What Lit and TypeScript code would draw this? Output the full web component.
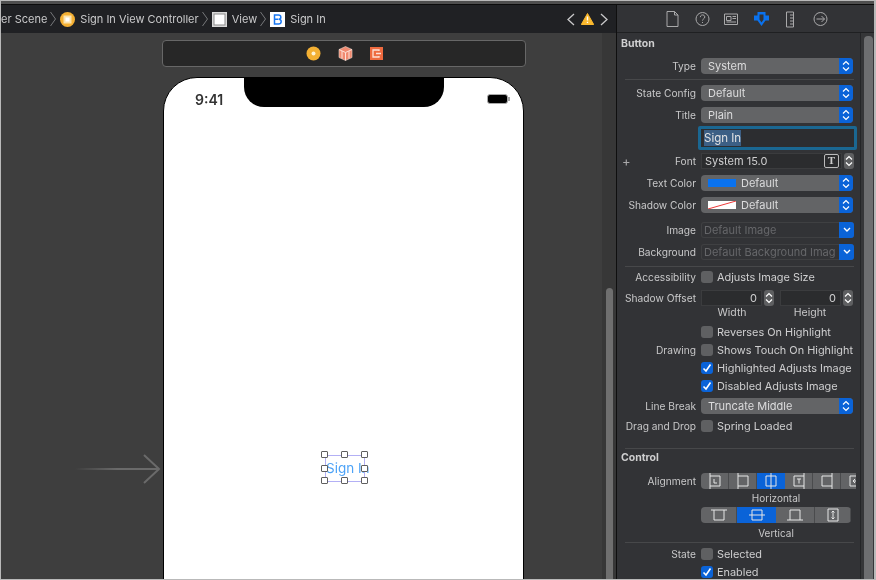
import {LitElement, html, css, svg} from 'lit';
import {customElement} from 'lit/decorators.js';

const updown = html`<svg width="8" height="12" viewBox="0 0 8 12" fill="none" stroke="#fff" stroke-width="1.2">
  <path d="M1 4.5 4 1.5 7 4.5M1 7.5 4 10.5 7 7.5" />
</svg>`;

const check = html`<svg width="10" height="10" viewBox="0 0 10 10" fill="none" stroke="#fff" stroke-width="1.6">
  <path d="M1.5 5.5 4 8 8.5 1.5" />
</svg>`;

const crumbSep = html`<svg class="sep" width="6" height="16" viewBox="0 0 6 16" fill="none" stroke="#77787a">
  <path d="M.5 1 5.500 8 .5 15" />
</svg>`;

const tabIcons = [
  svg`<path d="M3 2.5h7.5l3.5 3.5v11.5h-11zM10.5 2.5v3.5h3.5" />`,
  svg`<circle cx="8.5" cy="10" r="6.5" /><path d="M6.3 8.2c0-3 4.5-3 4.5-.2 0 1.8-2.3 1.8-2.3 3.6M8.5 13v1" />`,
  svg`<path d="M1.5 5h13v10.5h-13zM3.5 7.5h4.5v4h-4.5zM9.5 7.5h3.5M9.5 9.5h3.5M3.5 13h9.5" />`,
  svg``,
  svg`<path d="M4.5 3h7v15h-7zM8 6h3.5M8 9h3.5M8 12h3.5M8 15h3.5" />`,
  svg`<circle cx="8.5" cy="10" r="6.5" /><path d="M4.5 10h8M9.5 7l3 3-3 3" />`,
];

const alignIcons = [
  svg`<path d="M3 0v16M3 3h10v10H3M7 6v4h3" />`,
  svg`<path d="M3 0v16M3 3h10v10H3" />`,
  svg`<path d="M8 0v16M3 3h10v10H3z" />`,
  svg`<path d="M13 0v16M13 3H3v10h10M6 6h4M8 6v4.500" />`,
  svg`<path d="M13 0v16M13 3H3v10h10" />`,
  svg`<path d="M3 3h11v10H3zM12 8H6M8 6 6 8l2 2" />`,
];

const valignIcons = [
  svg`<path d="M0 3h16M3 3v10h10V3" />`,
  svg`<path d="M0 8h16M3 3h10v10H3z" />`,
  svg`<path d="M0 13h16M3 13V3h10v10" />`,
  svg`<path d="M3 2h10v12H3zM8 4v8M6.500 5.500 8 4l1.500 1.500M6.500 10.500 8 12l1.500-1.500" />`,
];

@customElement('app-root')
export class AppRoot extends LitElement {
  static styles = css`
    :host {
      display: block;
      width: 876px;
      height: 580px;
      overflow: hidden;
      font-family: Inter, 'Liberation Sans', sans-serif;
      font-size: 11px;
      color: #d4d4d5;
    }
    .frame {
      box-sizing: border-box;
      width: 876px;
      height: 580px;
      display: flex;
      flex-direction: column;
      background: #2b2b2c;
      border: solid #b9b9b9;
      border-width: 1px 2px 1px 1px;
      filter: blur(0.3px);
    }
    .topline {
      height: 3px;
      flex: none;
      background: #4f4f4f;
      border-bottom: 1px solid #0c0c0c;
    }
    .main {
      flex: 1;
      min-height: 0;
      display: flex;
    }

    /* editor side */
    .editor {
      width: 615px;
      display: flex;
      flex-direction: column;
      border-right: 1px solid #0f0f0f;
    }
    .crumbs {
      height: 28px;
      flex: none;
      display: flex;
      align-items: center;
      background: #202124;
      color: #c9c9ca;
      font-size: 11px;
      white-space: nowrap;
      padding-right: 8px;
    }
    .crumbs .sep {
      margin: 0 4px 0 3px;
    }
    .crumb-icon {
      width: 15px;
      height: 15px;
      margin-right: 5px;
      flex: none;
    }
    .nav {
      margin-left: auto;
      display: flex;
      align-items: center;
      gap: 6px;
    }
    .canvas-wrap {
      flex: 1;
      display: flex;
      min-height: 0;
    }
    .canvas {
      flex: 1;
      background: #3e3e3e;
      padding: 7px 0 0 161px;
      position: relative;
      overflow: hidden;
    }
    .scrollstrip {
      width: 14px;
      background: #373737;
      display: flex;
      flex-direction: column;
      align-items: center;
      padding-top: 255px;
      box-sizing: border-box;
    }
    .scrollstrip div {
      width: 7px;
      flex: 1;
      background: #6f6f6f;
      border-radius: 4px 4px 0 0;
    }
    .scene-bar {
      box-sizing: border-box;
      width: 364px;
      height: 27px;
      background: #272727;
      border: 1px solid #676767;
      border-radius: 4px;
      display: flex;
      align-items: center;
      justify-content: center;
      gap: 17px;
    }
    .phone {
      box-sizing: border-box;
      width: 361px;
      height: 560px;
      margin: 10px 0 0 1px;
      background: #fff;
      border: 1px solid #000;
      border-radius: 34px 34px 0 0;
      position: relative;
    }
    .notch {
      position: absolute;
      left: 80px;
      top: -1px;
      width: 200px;
      height: 30px;
      background: #000;
      border-radius: 0 0 20px 20px;
    }
    .time {
      position: absolute;
      left: 31px;
      top: 13px;
      font-size: 14px;
      font-weight: 600;
      color: #333;
    }
    .battery {
      position: absolute;
      left: 323px;
      top: 16px;
      width: 21px;
      height: 10px;
      background: #000;
      border: 1px solid #aaa;
      border-radius: 3px;
      box-sizing: border-box;
    }
    .battery::after {
      content: '';
      position: absolute;
      left: 20px;
      top: 2px;
      width: 2px;
      height: 4px;
      background: #aaa;
    }
    .entry {
      position: absolute;
      left: 74px;
      top: 421px;
    }
    .button {
      position: absolute;
      left: 161px;
      top: 377px;
      width: 40px;
      box-sizing: border-box;
      height: 27px;
      border: 1px solid #b3b0f5;
      color: #4da3f7;
      font-size: 13.500px;
      line-height: 25px;
      white-space: nowrap;
    }
    .handle {
      position: absolute;
      width: 5px;
      height: 5px;
      background: #fff;
      border: 1px solid #5f5f5f;
      border-radius: 1px;
    }

    /* inspector side */
    .inspector {
      flex: 1;
      display: flex;
      flex-direction: column;
      background: #323336;
      min-width: 0;
    }
    .tabs {
      height: 28px;
      flex: none;
      display: flex;
      align-items: center;
      padding: 1px 0 0 47px;
      gap: 12.500px;
      border-bottom: 1px solid #1f2022;
      box-sizing: border-box;
    }
    .tabs svg {
      fill: none;
      stroke: #a9a9aa;
    }
    .tabs svg.active {
      fill: #0a72ee;
      stroke: none;
    }
    .body {
      flex: 1;
      display: flex;
      min-height: 0;
    }
    .form {
      width: 244px;
      flex: none;
      padding: 2px 0 0 4px;
      box-sizing: border-box;
      overflow: hidden;
      border-right: 1px solid #242527;
    }
    .track {
      flex: 1;
      background: #353638;
      padding: 3px 1px 0 3px;
    }
    .track div {
      height: 100%;
      background: #6d6e70;
      border-radius: 4px 4px 0 0;
    }
    .title {
      font-weight: 700;
      font-size: 10.500px;
      color: #cfcfd0;
      height: 18px;
      line-height: 18px;
    }
    .row {
      display: grid;
      grid-template-columns: 75px 1fr;
      column-gap: 5px;
      align-items: center;
      height: 16px;
      white-space: nowrap;
    }
    .row.tall {
      height: 24px;
    }
    .row.cap {
      height: 14px;
    }
    .label {
      display: flex;
      justify-content: flex-end;
      color: #c8c8c9;
      font-size: 10.200px;
    }
    .plus {
      margin-right: auto;
      padding-left: 1px;
      font-size: 13px;
      line-height: 12px;
      color: #a9a9aa;
    }
    .hr {
      height: 1px;
      background: #47484a;
      margin-left: 4px;
      width: 229px;
    }
    .mt2 { margin-top: 2px; }
    .mt3 { margin-top: 3px; }
    .mt4 { margin-top: 4px; }
    .mt5 { margin-top: 5px; }
    .mt6 { margin-top: 6px; }
    .mt9 { margin-top: 9px; }
    .mt14 { margin-top: 14px; }
    .select {
      width: 152px;
      height: 16px;
      border-radius: 4px;
      background: #636466;
      display: flex;
      align-items: center;
      overflow: hidden;
      color: #dcdcdd;
    }
    .select .value {
      flex: 1;
      padding-left: 7px;
      display: flex;
      align-items: center;
      gap: 5px;
    }
    .stepper {
      width: 14px;
      height: 16px;
      background: #0a63d8;
      display: flex;
      align-items: center;
      justify-content: center;
      flex: none;
    }
    .swatch {
      width: 28px;
      height: 8px;
      background: #0a72ee;
      flex: none;
    }
    .swatch.none {
      background: #fff;
    }
    .swatch svg {
      display: block;
    }
    .input {
      box-sizing: border-box;
      width: 159px;
      height: 24px;
      margin-left: -3px;
      border: 3px solid #1a6792;
      border-radius: 2px;
      background: #2c2d30;
      padding-left: 3px;
      line-height: 18px;
      font-size: 11.500px;
    }
    .input span {
      background: #3c5f85;
      color: #e2e2e3;
      padding: 1px 0;
    }
    .font-row {
      display: flex;
      align-items: center;
      gap: 2px;
    }
    .field {
      box-sizing: border-box;
      height: 16px;
      background: #2b2c2e;
      box-shadow: inset 0 0 0 1px #3b3c3e;
      line-height: 16px;
      padding-left: 4px;
      color: #cfcfd0;
    }
    .font-field {
      width: 141px;
      display: flex;
      align-items: center;
      justify-content: space-between;
      padding-right: 3px;
    }
    .t-icon {
      box-sizing: border-box;
      width: 15px;
      height: 14px;
      border: 1.500px solid #bbb;
      border-radius: 2px;
      font: 700 11px/11px 'Liberation Serif', serif;
      text-align: center;
      color: #ccc;
    }
    .mini {
      width: 10px;
      height: 16px;
      border-radius: 3px;
      background: #5e5f61;
      display: flex;
      align-items: center;
      justify-content: center;
      flex: none;
    }
    .disabled {
      width: 153px;
      height: 16px;
      display: flex;
      box-shadow: inset 0 0 0 1px #3f4042;
      border-radius: 3px;
      overflow: hidden;
      color: #66676a;
      line-height: 16px;
    }
    .disabled .value {
      flex: 1;
      padding-left: 3px;
      overflow: hidden;
    }
    .disabled .stepper {
      width: 15px;
    }
    .offsets {
      display: flex;
      align-items: center;
      gap: 2px;
    }
    .offsets .field {
      width: 61px;
      text-align: right;
      padding-right: 5px;
    }
    .offsets .mini + .field {
      margin-left: 4px;
    }
    .captions {
      display: flex;
      height: 14px;
      line-height: 14px;
      color: #c8c8c9;
      text-align: center;
      font-size: 10.500px;
    }
    .captions span {
      width: 62px;
    }
    .captions span + span {
      margin-left: 16px;
    }
    .check {
      display: flex;
      align-items: center;
      gap: 4px;
      color: #cfcfd0;
      font-size: 10.900px;
    }
    .box {
      box-sizing: border-box;
      width: 12px;
      height: 12px;
      border-radius: 3px;
      background: #5f6062;
      display: flex;
      align-items: center;
      justify-content: center;
      flex: none;
    }
    .box.on {
      background: #0a63d8;
    }
    .segs {
      display: flex;
      border-radius: 4px;
      overflow: hidden;
      height: 16px;
      background: #636466;
    }
    .seg {
      box-sizing: border-box;
      height: 16px;
      display: flex;
      align-items: center;
      justify-content: center;
      border-right: 1px solid #4a4b4d;
      flex: none;
    }
    .seg.on {
      background: #0a63d8;
      border-right: 0;
    }
    .seg svg {
      fill: none;
      stroke: #e6e6e6;
    }
    .align-segs {
      width: 155px;
      border-radius: 4px 0 0 4px;
    }
    .align-segs .seg {
      width: 28px;
    }
    .valign-segs {
      width: 150px;
    }
    .valign-segs .seg {
      width: 39px;
    }
    .valign-segs .seg:first-child,
    .valign-segs .seg:last-child {
      width: 36px;
    }
    .center-cap {
      text-align: center;
      width: 150px;
      height: 14px;
      line-height: 14px;
      color: #c8c8c9;
      font-size: 10px;
    }
  `;

  private select(value: unknown) {
    return html`<div class="select">
      <div class="value">${value}</div>
      <div class="stepper">${updown}</div>
    </div>`;
  }

  private disabledSelect(value: string) {
    return html`<div class="disabled">
      <div class="value">${value}</div>
      <div class="stepper">
        <svg width="8" height="6" viewBox="0 0 8 6" fill="none" stroke="#fff" stroke-width="1.4"><path d="M1 1 4 4 7 1" /></svg>
      </div>
    </div>`;
  }

  private checkbox(text: string, on = false) {
    return html`<div class="check">
      <div class="box ${on ? 'on' : ''}">${on ? check : ''}</div>
      ${text}
    </div>`;
  }

  private row(label: unknown, content: unknown, cls = '') {
    return html`<div class="row ${cls}">
      <div class="label">${label}</div>
      <div>${content}</div>
    </div>`;
  }

  private renderCrumbs() {
    return html`<div class="crumbs">
      <span>er Scene</span>
      ${crumbSep}
      <svg class="crumb-icon" viewBox="0 0 15 15">
        <circle cx="7.500" cy="7.500" r="7.500" fill="#f4b033" />
        <rect x="3.500" y="3.500" width="8" height="8" fill="#fbe3ae" />
        <rect x="5.500" y="5.500" width="4" height="4" fill="#fff" />
      </svg>
      <span>Sign In View Controller</span>
      ${crumbSep}
      <svg class="crumb-icon" viewBox="0 0 15 15">
        <rect width="15" height="15" fill="#d9d9d9" />
        <rect x="2" y="2" width="11" height="11" fill="#fff" stroke="#8d8d8d" />
      </svg>
      <span>View</span>
      ${crumbSep}
      <svg class="crumb-icon" viewBox="0 0 15 15">
        <rect width="15" height="15" fill="#fff" />
        <path d="M4.500 3h4c3 0 3 4 .5 4.300 3 .2 3 4.700-.5 4.700h-4zM4.500 7.300h4" fill="none" stroke="#1877f2" stroke-width="1.500" />
      </svg>
      <span>Sign In</span>
      <div class="nav">
        <svg width="8" height="13" viewBox="0 0 8 13" fill="none" stroke="#c9c9ca" stroke-width="1.300"><path d="M7 1 1 6.500 7 12" /></svg>
        <svg width="13" height="12" viewBox="0 0 13 12">
          <path d="M6.500.5 12.700 11.500H.3z" fill="#fbb92e" stroke="#fbb92e" stroke-linejoin="round" />
          <path d="M6.500 3.500v4M6.500 8.800v1.200" stroke="#fff" stroke-width="1.400" />
        </svg>
        <svg width="8" height="13" viewBox="0 0 8 13" fill="none" stroke="#c9c9ca" stroke-width="1.300"><path d="M1 1 7 6.500 1 12" /></svg>
      </div>
    </div>`;
  }

  private renderPhone() {
    const handles = [
      [-5, -5], [15, -5], [35, -5],
      [-5, 9], [35, 9],
      [-5, 21], [15, 21], [35, 21],
    ];
    return html`<div class="phone">
      <div class="notch"></div>
      <div class="time">9:41</div>
      <div class="battery"></div>
      <div class="button">
        Sign In
        ${handles.map(
          ([x, y]) => html`<div class="handle" style="left:${x}px;top:${y}px"></div>`
        )}
      </div>
    </div>`;
  }

  private renderForm() {
    return html`<div class="form">
      <div class="title">Button</div>
      ${this.row('Type', this.select('System'), 'mt5')}
      <div class="hr mt5"></div>
      ${this.row('State Config', this.select('Default'), 'mt5')}
      ${this.row('Title', this.select('Plain'), 'mt6')}
      ${this.row('', html`<div class="input"><span>Sign In</span></div>`, 'tall mt3')}
      ${this.row(
        html`<span class="plus">+</span>Font`,
        html`<div class="font-row">
          <div class="field font-field">System 15.0<div class="t-icon">T</div></div>
          <div class="mini">${updown}</div>
        </div>`,
        'mt3'
      )}
      ${this.row('Text Color', this.select(html`<span class="swatch"></span>Default`), 'mt6')}
      ${this.row(
        'Shadow Color',
        this.select(html`<span class="swatch none">
            <svg width="28" height="8" viewBox="0 0 28 8"><path d="M0 8 28 0" stroke="#ee3a3a" /></svg>
          </span>Default`),
        'mt6'
      )}
      ${this.row('Image', this.disabledSelect('Default Image'), 'mt9')}
      ${this.row('Background', this.disabledSelect('Default Background Imag'), 'mt6')}
      <div class="hr mt6"></div>
      ${this.row('Accessibility', this.checkbox('Adjusts Image Size'), 'mt2')}
      ${this.row(
        'Shadow Offset',
        html`<div class="offsets">
          <div class="field">0</div><div class="mini">${updown}</div>
          <div class="field">0</div><div class="mini">${updown}</div>
        </div>`,
        'mt5'
      )}
      <div class="row cap"><div></div><div class="captions"><span>Width</span><span>Height</span></div></div>
      ${this.row('', this.checkbox('Reverses On Highlight'), 'mt4')}
      ${this.row('Drawing', this.checkbox('Shows Touch On Highlight'), 'mt2')}
      ${this.row('', this.checkbox('Highlighted Adjusts Image', true), 'mt2')}
      ${this.row('', this.checkbox('Disabled Adjusts Image', true), 'mt2')}
      ${this.row('Line Break', this.select('Truncate Middle'), 'mt4')}
      ${this.row('Drag and Drop', this.checkbox('Spring Loaded'), 'mt4')}
      <div class="hr mt14"></div>
      <div class="title">Control</div>
      ${this.row(
        'Alignment',
        html`<div class="segs align-segs">
          ${alignIcons.map(
            (icon, i) => html`<div class="seg ${i === 2 ? 'on' : ''}">
              <svg width="16" height="16" viewBox="0 0 16 16">${icon}</svg>
            </div>`
          )}
        </div>`,
        'mt6'
      )}
      <div class="row cap mt2"><div></div><div class="center-cap">Horizontal</div></div>
      ${this.row(
        '',
        html`<div class="segs valign-segs">
          ${valignIcons.map(
            (icon, i) => html`<div class="seg ${i === 1 ? 'on' : ''}">
              <svg width="16" height="16" viewBox="0 0 16 16">${icon}</svg>
            </div>`
          )}
        </div>`,
        'mt2'
      )}
      <div class="row cap mt3"><div></div><div class="center-cap">Vertical</div></div>
      <div class="hr mt2"></div>
      ${this.row('State', this.checkbox('Selected'), 'mt3')}
      ${this.row('', this.checkbox('Enabled', true), 'mt2')}
    </div>`;
  }

  render() {
    return html`<div class="frame">
      <div class="topline"></div>
      <div class="main">
        <div class="editor">
          ${this.renderCrumbs()}
          <div class="canvas-wrap">
            <div class="canvas">
              <div class="scene-bar">
                <svg width="15" height="15" viewBox="0 0 15 15">
                  <circle cx="7.500" cy="7.500" r="7" fill="#f4b033" />
                  <circle cx="7.500" cy="7.500" r="2" fill="#fff3d4" />
                </svg>
                <svg width="15" height="15" viewBox="0 0 15 15">
                  <path d="M7.500.5 14 3.500v8L7.500 14.500 1 11.500v-8z" fill="#f08a70" stroke="#e8d8d0" stroke-width=".6" />
                  <path d="M1 3.500 7.500 6.500 14 3.500M7.500 6.500v8M4 5v7.500M11 5v7.500" fill="none" stroke="#fde0d6" />
                </svg>
                <svg width="13" height="13" viewBox="0 0 13 13">
                  <rect width="13" height="13" fill="#ee6a3f" />
                  <path d="M9 4V3H3v7h6V9M6 6.500h5" fill="none" stroke="#fde0d6" stroke-width="1.300" />
                </svg>
              </div>
              ${this.renderPhone()}
              <svg class="entry" width="86" height="32" viewBox="0 0 86 32" fill="none">
                <defs>
                  <linearGradient id="fade" gradientUnits="userSpaceOnUse" x1="0" y1="0" x2="42" y2="0">
                    <stop offset="0" stop-color="#6a6a6a" stop-opacity="0" />
                    <stop offset="1" stop-color="#6a6a6a" />
                  </linearGradient>
                </defs>
                <path d="M0 15h84" stroke="url(#fade)" stroke-width="2" />
                <path d="M69 1 84 15 69 29" stroke="#6a6a6a" stroke-width="2" />
              </svg>
            </div>
            <div class="scrollstrip"><div></div></div>
          </div>
        </div>
        <div class="inspector">
          <div class="tabs">
            ${tabIcons.map((icon, i) =>
              i === 3
                ? html`<svg class="active" width="17" height="20" viewBox="-1 -3 17 20">
                    <path d="M3.500 0h8v3.500H15v5h-3.500l-4 5.500-4-5.500H0v-5h3.500zM5.500 2.500v5l2 3 2-3v-5z" fill-rule="evenodd" />
                  </svg>`
                : html`<svg width="17" height="20" viewBox="0 0 17 20">${icon}</svg>`
            )}
          </div>
          <div class="body">
            ${this.renderForm()}
            <div class="track"><div></div></div>
          </div>
        </div>
      </div>
    </div>`;
  }
}
